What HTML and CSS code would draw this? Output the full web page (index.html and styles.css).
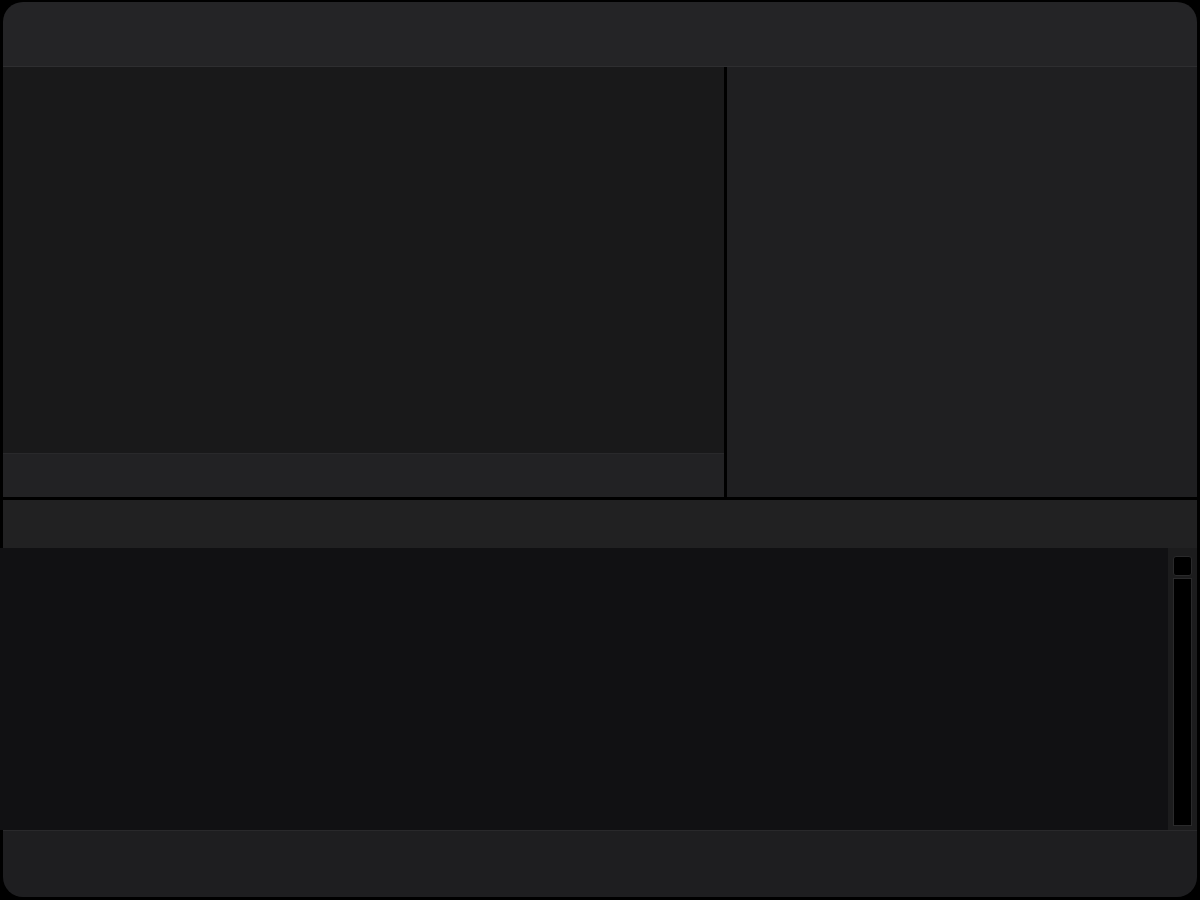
FILE: index.html
```html
<!DOCTYPE html>
<html lang="en">
<head>
    <meta charset="UTF-8">
    <meta name="viewport" content="width=device-width, initial-scale=1.0">
    <title>Editor</title>
    <link rel="stylesheet" href="styles.css">
</head>
<body>

    <div class="window">
        <!-- title bar -->
        <div class="titlebar"></div>

        <!-- upper area: canvas + inspector -->
        <div class="top">
            <div class="left">
                <div class="canvas"></div>
                <div class="left-bar"></div>
            </div>
            <div class="divider"></div>
            <div class="inspector"></div>
        </div>

        <div class="toolbar"></div>

        <!-- console with scrollbar -->
        <div class="console">
            <div class="console-body"></div>
            <div class="scroll">
                <div class="scroll-btn"></div>
                <div class="scroll-track"></div>
            </div>
        </div>

        <div class="statusbar"></div>
    </div>

</body>
</html>
```

FILE: styles.css
```css
/* general */
html, body {
    margin: 0;
    padding: 0;
    background: #000;
    font-family: "Liberation Sans", Arial, sans-serif;
    height: 900px;
    overflow: hidden;
}

.window {
    margin: 2px 3px 0 3px;
    height: 895px;
    display: flex;
    flex-direction: column;
}

/* title bar */
.titlebar {
    height: 64px;
    flex: none;
    background: #242426;
    border-bottom: 1px solid #2e2e30;
    border-radius: 20px 20px 0 0;
}

/* upper area */
.top {
    height: 430px;
    flex: none;
    display: flex;
}

.left {
    width: 721px;
    display: flex;
    flex-direction: column;
}

.canvas {
    flex: 1;
    background: #19191a;
}

.left-bar {
    height: 43px;
    background: #222224;
    border-top: 1px solid #29292b;
}

.divider {
    width: 3px;
    background: #000;
}

.inspector {
    flex: 1;
    background: #1f1f21;
}

.toolbar {
    height: 48px;
    flex: none;
    margin-top: 3px;
    background: #212122;
}

/* console */
.console {
    height: 282px;
    flex: none;
    display: flex;
    margin-left: -3px;
}

.console-body {
    flex: 1;
    background: #111113;
}

.scroll {
    width: 29px;
    background: #1c1c1d;
    padding: 8px 5px 4px 5px;
    box-sizing: border-box;
    display: flex;
    flex-direction: column;
    gap: 2px;
}

.scroll-btn {
    height: 18px;
    background: #000;
    border: 1px solid #2a2a2b;
    border-radius: 3px;
}

.scroll-track {
    flex: 1;
    background: #000;
    border: 1px solid #2a2a2b;
}

/* status bar */
.statusbar {
    flex: 1;
    background: #1e1e20;
    border-top: 1px solid #29292b;
    border-radius: 0 0 20px 20px;
}
```
